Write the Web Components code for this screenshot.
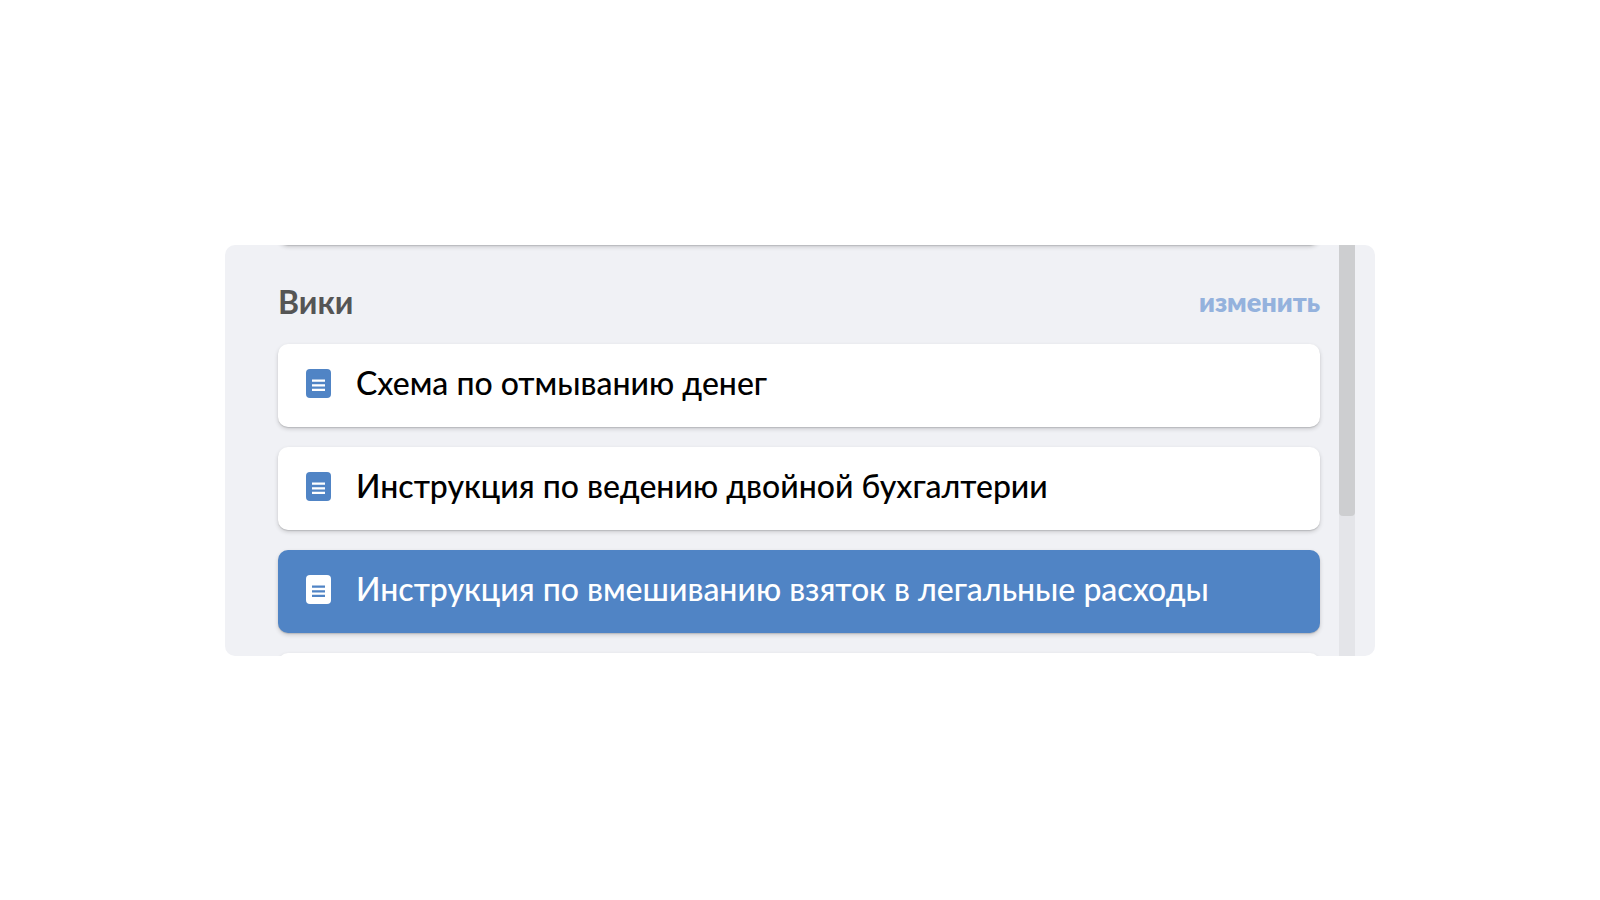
<!DOCTYPE html>
<html lang="ru">
<head>
<meta charset="utf-8">
<meta name="viewport" content="width=device-width, initial-scale=1">
<title>Вики</title>
<style>
  body {
    margin: 0;
    min-height: 100vh;
    display: grid;
    align-items: center;
    justify-items: center;
    background: #fff;
    font-family: Lato, "Open Sans", sans-serif;
  }
</style>
</head>
<body>
<wiki-panel>
  <wiki-card></wiki-card>
  <wiki-heading>Вики<a slot="action" href="#edit">изменить</a></wiki-heading>
  <wiki-card href="#scheme">Схема по отмыванию денег</wiki-card>
  <wiki-card href="#accounting">Инструкция по ведению двойной бухгалтерии</wiki-card>
  <wiki-card href="#expenses" selected>Инструкция по вмешиванию взяток в легальные расходы</wiki-card>
  <wiki-card></wiki-card>
</wiki-panel>

<script>
const define = (name, html, setup) => {
  const template = document.createElement('template');
  template.innerHTML = html;
  customElements.define(name, class extends HTMLElement {
    connectedCallback() {
      if (this.shadowRoot) return;
      this.attachShadow({ mode: 'open' }).append(template.content.cloneNode(true));
      if (setup) setup(this, this.shadowRoot);
    }
  });
};

define('wiki-icon', `
  <style>
    :host { display: block; flex: none; width: 25px; height: 29px; }
    svg { display: block; width: 100%; height: 100%; }
  </style>
  <svg viewBox="0 0 25 29" aria-hidden="true">
    <rect width="25" height="29" rx="4" fill="currentColor"/>
    <path d="M6 11.7h13M6 16.3h13M6 20.9h13" stroke="var(--icon-lines, #fff)" stroke-width="2.2"/>
  </svg>`);

define('wiki-card', `
  <style>
    :host { display: block; }
    a {
      display: flex;
      align-items: center;
      gap: 25px;
      box-sizing: border-box;
      min-height: 83px;
      padding: 0 28px 4px;
      border-radius: 10px;
      background: #fff;
      box-shadow: 0 1px 1px rgba(0, 0, 0, .12), 0 2px 4px rgba(0, 0, 0, .16);
      color: #000;
      font-size: 32px;
      font-weight: 500;
      line-height: 40px;
      text-decoration: none;
    }
    wiki-icon { color: #5084c5; }
    :host([selected]) a { background: #5084c5; color: #fff; }
    :host([selected]) wiki-icon { color: #fff; --icon-lines: #5084c5; }
    :host(:not([href])) wiki-icon { display: none; }
  </style>
  <a><wiki-icon></wiki-icon><slot></slot></a>`,
  (host, root) => {
    if (host.hasAttribute('href')) root.querySelector('a').href = host.getAttribute('href');
  });

define('wiki-heading', `
  <style>
    :host { display: block; }
    header {
      display: flex;
      align-items: center;
      justify-content: space-between;
      padding: 17px 0 2px;
    }
    h2 { margin: 0; color: #555; font-size: 32px; font-weight: 700; line-height: 40px; }
    ::slotted(a) { color: #94b2dd; font-size: 27px; font-weight: 800; line-height: 40px; text-decoration: none; }
  </style>
  <header><h2><slot></slot></h2><slot name="action"></slot></header>`);

define('wiki-scrollbar', `
  <style>
    :host { display: block; flex: none; width: 16px; background: #e4e5e9; }
    div { height: 66%; border-radius: 0 0 4px 4px; background: #cdced0; }
  </style>
  <div></div>`);

define('wiki-panel', `
  <style>
    :host {
      display: flex;
      gap: 19px;
      box-sizing: border-box;
      width: calc(100% - 48px);
      max-width: 1150px;
      max-height: 411px;
      padding: 0 20px 0 53px;
      border-radius: 10px;
      overflow: hidden;
      background: #f0f1f5;
    }
    /* The list is scrolled past its first card, which leaves only its shadow in view. */
    section { flex: 1; min-width: 0; display: flex; flex-direction: column; gap: 20px; margin-top: -83px; }
  </style>
  <section><slot></slot></section>
  <wiki-scrollbar></wiki-scrollbar>`);
</script>
</body>
</html>
